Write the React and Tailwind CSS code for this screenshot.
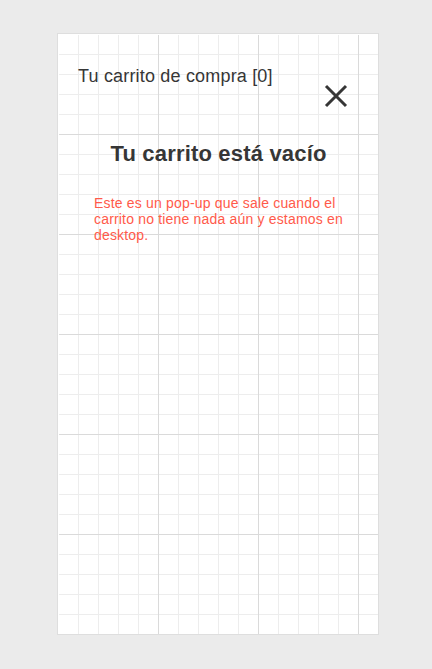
export default function App() {
  return (
    <div className="min-h-screen bg-[#ebebeb] pt-[33px] pl-[57px] font-['Liberation_Sans',_Arial,_sans-serif] tracking-[0.18px]">
      {/* popup card */}
      <div className="w-[322px] h-[602px] border border-[#dedede] bg-white pt-px pl-px">
        <div className="h-full bg-[linear-gradient(to_right,transparent_99px,#dadada_99px),linear-gradient(to_bottom,transparent_99px,#dadada_99px),linear-gradient(to_right,transparent_19px,#ededed_19px),linear-gradient(to_bottom,transparent_19px,#ededed_19px)] bg-[size:100px_100px,100px_100px,20px_20px,20px_20px]">
          <div className="flex justify-between items-start pl-[19px] pr-[30px]">
            <h3 className="mt-[31px] text-[18px] leading-[21px] text-[#363636]">
              Tu carrito de compra [0]
            </h3>
            <button className="mt-[49px]" aria-label="Cerrar">
              <svg width="24" height="24" viewBox="0 0 24 24">
                <path
                  d="M2 2 L22 22 M22 2 L2 22"
                  stroke="#363636"
                  strokeWidth="3"
                  fill="none"
                />
              </svg>
            </button>
          </div>

          <h2 className="mt-[34px] text-center text-[22px] leading-[24px] font-bold text-[#363636]">
            Tu carrito está vacío
          </h2>

          <p className="mt-[29px] px-[35px] text-[14px] leading-[16px] text-[#ff5a4a]">
            Este es un pop-up que sale cuando el carrito no tiene nada aún y
            estamos en desktop.
          </p>
        </div>
      </div>
    </div>
  );
}
